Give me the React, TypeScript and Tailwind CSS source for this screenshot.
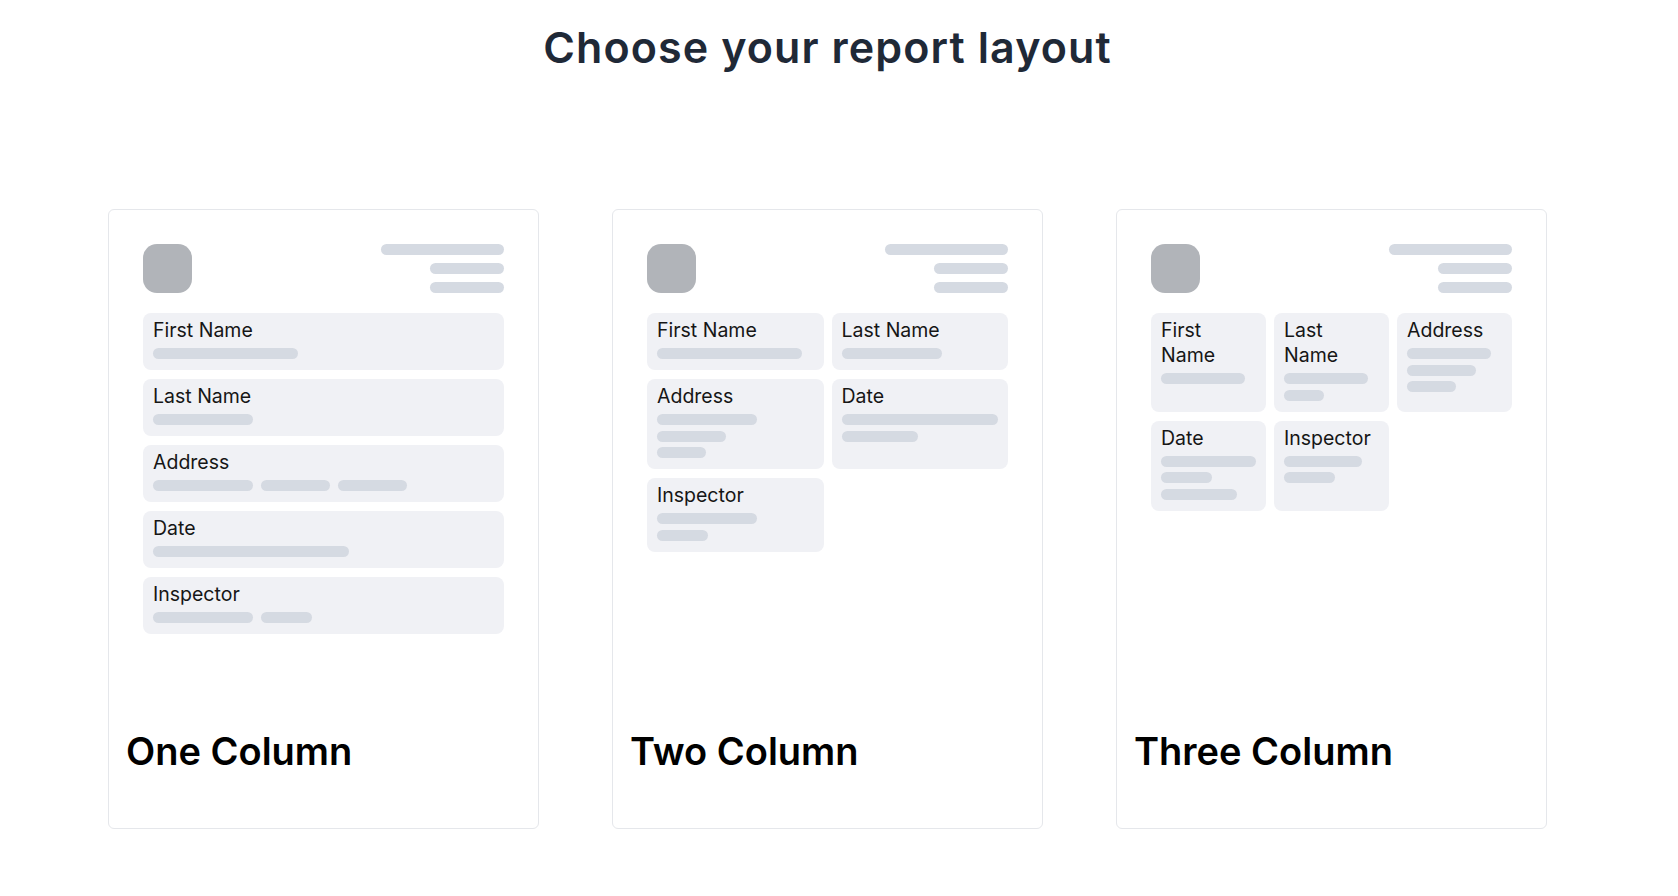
import React from 'react';

type Layout = 'one' | 'two' | 'three';

interface Field {
  label: string;
  bars: Record<Layout, number[]>;
}

const fields: Field[] = [
  { label: 'First Name', bars: { one: [145], two: [145], three: [84] } },
  { label: 'Last Name', bars: { one: [100], two: [100], three: [84, 40] } },
  { label: 'Address', bars: { one: [100, 69, 69], two: [100, 69, 49], three: [84, 69, 49] } },
  { label: 'Date', bars: { one: [196], two: [196, 76], three: [196, 51, 76] } },
  { label: 'Inspector', bars: { one: [100, 51], two: [100, 51], three: [78, 51] } },
];

const layouts: { id: Layout; title: string }[] = [
  { id: 'one', title: 'One Column' },
  { id: 'two', title: 'Two Column' },
  { id: 'three', title: 'Three Column' },
];

function FieldBox({ field, layout }: { field: Field; layout: Layout }) {
  const bars = field.bars[layout];
  return (
    <div className="rounded-lg bg-[#f0f1f5] px-[10px] pt-[5px] pb-[11px]">
      <div className="text-[19.5px] leading-[25px] text-[#161616]">{field.label}</div>
      <div
        className={
          layout === 'one'
            ? 'mt-[5px] flex flex-row gap-2'
            : 'mt-[5px] flex flex-col gap-[5.5px]'
        }
      >
        {bars.map((w, i) => (
          <div
            key={i}
            className="h-[11px] max-w-full rounded-full bg-[#d5dae2]"
            style={{ width: w }}
          />
        ))}
      </div>
    </div>
  );
}

function Preview({ layout }: { layout: Layout }) {
  const grid =
    layout === 'one'
      ? 'grid grid-cols-1 gap-y-[9px]'
      : layout === 'two'
        ? 'grid grid-cols-2 gap-x-2 gap-y-[9px]'
        : 'grid grid-cols-3 gap-x-2 gap-y-[9px]';

  return (
    <div className="px-[34px] pt-[34px]">
      {/* header: logo + address lines */}
      <div className="flex h-[49px] justify-between">
        <div className="h-[49px] w-[49px] rounded-[14px] bg-[#b1b4b9]" />
        <div className="flex h-[49px] flex-col items-end justify-between">
          <div className="h-[11px] w-[123px] rounded-full bg-[#d5dae2]" />
          <div className="h-[11px] w-[74px] rounded-full bg-[#d5dae2]" />
          <div className="h-[11px] w-[74px] rounded-full bg-[#d5dae2]" />
        </div>
      </div>
      <div className={`mt-5 ${grid}`}>
        {fields.map((f) => (
          <FieldBox key={f.label} field={f} layout={layout} />
        ))}
      </div>
    </div>
  );
}

export default function App() {
  return (
    <div className="min-h-screen bg-white pl-[108px] pr-[131px] font-['Inter',sans-serif]">
      <h1 className="pt-[21px] text-center text-[43px] leading-[52px] font-semibold tracking-[1.1px] text-[#1f2937]">
        Choose your report layout
      </h1>

      <div className="mt-[136px] grid grid-cols-3 gap-[73px]">
        {layouts.map((l) => (
          <div
            key={l.id}
            className="flex h-[620px] flex-col rounded-md border border-[#e5e7eb] bg-white"
          >
            <div className="flex-1">
              <Preview layout={l.id} />
            </div>
            <div className="px-[17px] pb-[58px] text-[38px] leading-none font-semibold text-black">
              {l.title}
            </div>
          </div>
        ))}
      </div>
    </div>
  );
}
